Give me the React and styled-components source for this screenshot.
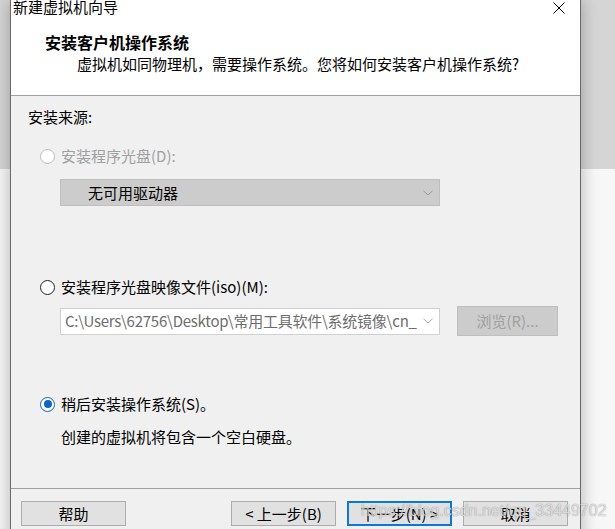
import React from "react";
import styled, { createGlobalStyle } from "styled-components";

const GlobalStyle = createGlobalStyle`
  html, body { margin: 0; padding: 0; }
  body {
    width: 615px;
    height: 529px;
    overflow: hidden;
    background: linear-gradient(to bottom, #d5d5d5 0, #d5d5d5 169px, #f7f7f7 169px, #f7f7f7 100%);
    font-family: "Noto Sans CJK SC", "Noto Sans", sans-serif;
    color: #000;
  }
`;

const Page = styled.div`
  position: relative;
  width: 615px;
  height: 529px;
  overflow: hidden;
  padding-left: 10px;
  box-sizing: border-box;
`;

const Dialog = styled.div`
  width: 571px;
  height: 560px;
  box-sizing: border-box;
  border-left: 1px solid #6a6a6a;
  border-right: 1px solid #6a6a6a;
  background: #f0f0f0;
  box-shadow: 0 0 16px rgba(0, 0, 0, 0.28);
  display: flex;
  flex-direction: column;
`;

const TitleBar = styled.div`
  height: 16px;
  background: #fff;
  display: flex;
  justify-content: space-between;
  align-items: flex-start;
  padding: 0 15px 0 2px;
`;

const TitleText = styled.span`
  font-size: 15px;
  line-height: 16px;
  margin-top: -1px;
`;

const CloseIcon = styled.svg`
  margin-top: 2px;
  width: 12px;
  height: 12px;
  flex: none;
`;

const Header = styled.div`
  box-sizing: border-box;
  height: 80px;
  background: #fff;
  border-bottom: 1px solid #a0a0a0;
  padding: 16px 0 0 34px;
`;

const HeaderTitle = styled.div`
  font-size: 16px;
  font-weight: bold;
  line-height: 20px;
`;

const HeaderSub = styled.div`
  margin: 2px 0 0 32px;
  font-size: 15px;
  line-height: 20px;
`;

const Body = styled.div`
  box-sizing: border-box;
  height: 392px;
  padding: 11px 0 0 17px;
  display: flex;
  flex-direction: column;
  font-size: 15px;
  line-height: 20px;
`;

const SectionLabel = styled.div``;

const Options = styled.div`
  margin-left: 12px;
  display: flex;
  flex-direction: column;
`;

const OptionRow = styled.label`
  display: flex;
  align-items: center;
  margin-top: ${(p) => p.$top}px;
  color: ${(p) => (p.$disabled ? "#a0a0a0" : "#000")};
`;

const Radio = styled.span`
  box-sizing: border-box;
  width: 15px;
  height: 15px;
  margin-right: 6px;
  border-radius: 50%;
  flex: none;
  background: #fff;
  border: ${(p) =>
    p.$disabled ? "1px solid #bcbcbc" : p.$checked ? "1.5px solid #0f66bd" : "1px solid #222"};
  display: flex;
  align-items: center;
  justify-content: center;
  &::after {
    content: "";
    width: 8px;
    height: 8px;
    border-radius: 50%;
    background: #0f66bd;
    display: ${(p) => (p.$checked ? "block" : "none")};
  }
`;

const Select = styled.div`
  box-sizing: border-box;
  margin: ${(p) => p.$top}px 0 0 20px;
  width: 380px;
  height: 27px;
  display: flex;
  align-items: center;
  justify-content: space-between;
  padding: 0 6px 0 ${(p) => p.$padLeft}px;
  background: ${(p) => (p.$disabled ? "#cccccc" : "#fff")};
  border: 1px solid ${(p) => (p.$disabled ? "#bfbfbf" : "#d0d0d0")};
  color: ${(p) => (p.$disabled ? "#000" : "#6d6d6d")};
  font-size: 15px;
`;

const SelectText = styled.span`
  white-space: nowrap;
  overflow: hidden;
  flex: 1;
  letter-spacing: ${(p) => p.$tight ? "-0.25px" : "0"};
`;

const Chevron = styled.svg`
  width: 10px;
  height: 6px;
  flex: none;
  margin-left: 6px;
`;

const FileRow = styled.div`
  display: flex;
  align-items: center;
  margin-top: 9px;
  height: 30px;
`;

const BrowseButton = styled.div`
  box-sizing: border-box;
  margin-left: 17px;
  width: 101px;
  height: 30px;
  background: #cccccc;
  border: 1px solid #bfbfbf;
  color: #a0a0a0;
  display: flex;
  align-items: center;
  justify-content: center;
  font-size: 15px;
`;

const Description = styled.div`
  margin: 13px 0 0 21px;
`;

const Footer = styled.div`
  border-top: 1px solid #a0a0a0;
  padding: 12px 12px 0 10px;
  display: flex;
  gap: 11px;
`;

const Button = styled.div`
  box-sizing: border-box;
  width: 105px;
  height: 25px;
  background: #e1e1e1;
  border: ${(p) => (p.$default ? "2px solid #0a78d7" : "1px solid #adadad")};
  display: flex;
  align-items: center;
  justify-content: center;
  font-size: 15px;
  line-height: 20px;
  margin-right: ${(p) => (p.$push ? "auto" : "0")};
`;

const Watermark = styled.div`
  position: absolute;
  left: 361px;
  top: 501px;
  font-family: "Liberation Sans", Arial, sans-serif;
  font-size: 16px;
  line-height: 20px;
  color: rgba(255, 255, 255, 0.72);
  text-shadow: 0 0 1px rgba(0, 0, 0, 0.5);
  white-space: nowrap;
  pointer-events: none;
`;

const ChevronIcon = ({ color }) => (
  <Chevron viewBox="0 0 10 6">
    <path d="M0.5 0.8 L5 5 L9.5 0.8" fill="none" stroke={color} strokeWidth="1" />
  </Chevron>
);

export default function App() {
  return (
    <>
      <GlobalStyle />
      <Page>
        <Dialog>
          <TitleBar>
            <TitleText>新建虚拟机向导</TitleText>
            <CloseIcon viewBox="0 0 12 12">
              <path d="M0.5 0.5 L11.5 11.5 M11.5 0.5 L0.5 11.5" stroke="#000" strokeWidth="1" />
            </CloseIcon>
          </TitleBar>
          <Header>
            <HeaderTitle>安装客户机操作系统</HeaderTitle>
            <HeaderSub>虚拟机如同物理机，需要操作系统。您将如何安装客户机操作系统?</HeaderSub>
          </Header>
          <Body>
            <SectionLabel>安装来源:</SectionLabel>
            <Options>
              <OptionRow $top={19} $disabled>
                <Radio $disabled />
                安装程序光盘(D):
              </OptionRow>
              <Select $top={13} $padLeft={27} $disabled>
                <SelectText>无可用驱动器</SelectText>
                <ChevronIcon color="#9a9a9a" />
              </Select>
              <OptionRow $top={71}>
                <Radio />
                安装程序光盘映像文件(iso)(M):
              </OptionRow>
              <FileRow>
                <Select $top={0} $padLeft={4}>
                  <SelectText $tight>C:\Users\62756\Desktop\常用工具软件\系统镜像\cn_</SelectText>
                  <ChevronIcon color="#a8a8a8" />
                </Select>
                <BrowseButton>浏览(R)...</BrowseButton>
              </FileRow>
              <OptionRow $top={58}>
                <Radio $checked />
                稍后安装操作系统(S)。
              </OptionRow>
              <Description>创建的虚拟机将包含一个空白硬盘。</Description>
            </Options>
          </Body>
          <Footer>
            <Button $push>帮助</Button>
            <Button>&lt; 上一步(B)</Button>
            <Button $default>下一步(N) &gt;</Button>
            <Button>取消</Button>
          </Footer>
        </Dialog>
        <Watermark>https://blog.csdn.net/qq_33449702</Watermark>
      </Page>
    </>
  );
}
